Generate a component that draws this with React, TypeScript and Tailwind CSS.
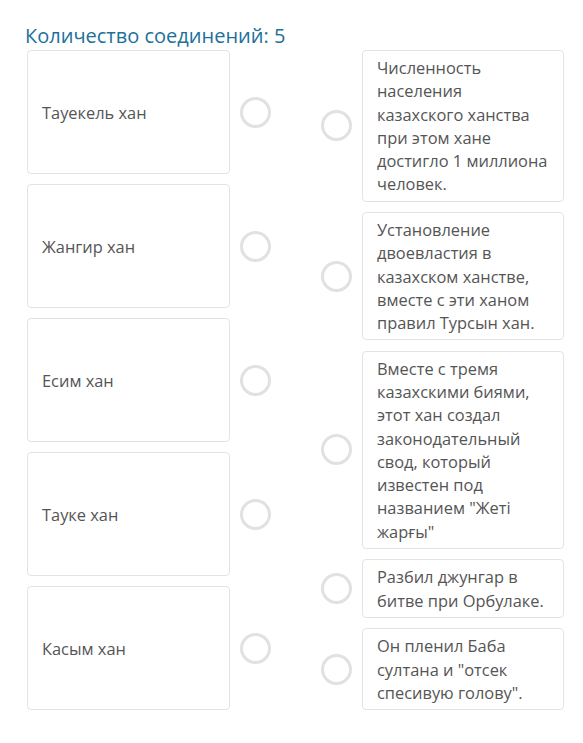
const LEFT = ["Тауекель хан", "Жангир хан", "Есим хан", "Тауке хан", "Касым хан"];

const RIGHT = [
  "Численность населения казахского ханства при этом хане достигло 1 миллиона человек.",
  "Установление двоевластия в казахском ханстве, вместе с эти ханом правил Турсын хан.",
  "Вместе с тремя казахскими биями, этот хан создал законодательный свод, который известен под названием \"Жеті жарғы\"",
  "Разбил джунгар в битве при Орбулаке.",
  "Он пленил Баба султана и \"отсек спесивую голову\".",
];

function Dot() {
  return <div className="h-[31px] w-[31px] shrink-0 rounded-full border-[3px] border-[#e0e2e2] bg-white" />;
}

export default function App() {
  return (
    <div className="min-h-[743px] bg-white pl-[25px] pt-[22px] font-['Open_Sans',sans-serif] text-[#555]">
      <div className="h-[28px] text-[20px] leading-[28px] text-[#1d7099]">Количество соединений: 5</div>
      <div className="flex gap-[50px]">
        <div className="flex flex-col gap-[10px] pl-[2px]">
          {LEFT.map((t) => (
            <div key={t} className="flex items-center gap-[10px]">
              <div className="flex h-[124px] w-[203px] items-center rounded-[4px] border border-[#dfe4e6] px-[14px] text-[16.4px] leading-[23px]">
                {t}
              </div>
              <Dot />
            </div>
          ))}
        </div>
        <div className="flex flex-col gap-[10.5px]">
          {RIGHT.map((t) => (
            <div key={t} className="flex items-center gap-[10px]">
              <Dot />
              <div className="w-[202px] rounded-[4px] border border-[#dfe4e6] py-[5px] pl-[14px] pr-[13px] text-[16.4px] leading-[23.25px]">
                {t}
              </div>
            </div>
          ))}
        </div>
      </div>
    </div>
  );
}
